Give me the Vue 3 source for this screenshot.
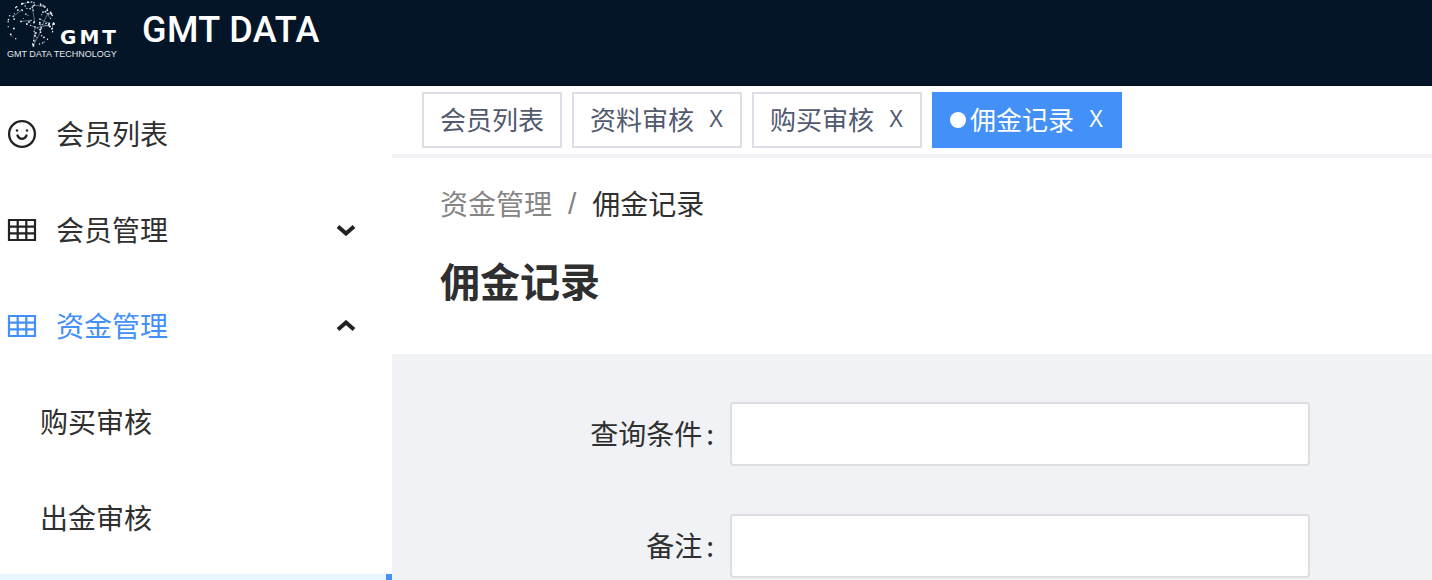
<template>
  <div class="page">
    <header class="top">
      <div class="logo">
        <svg class="globe" width="52" height="50" viewBox="0 0 52 50">
          <path
            v-for="(l, i) in links"
            :key="'l' + i"
            :d="l"
            stroke="#a4adb8"
            stroke-width="0.6"
            fill="none"
          />
          <circle
            v-for="(d, i) in dots"
            :key="i"
            :cx="d.x"
            :cy="d.y"
            :r="d.r"
            fill="#f2f4f6"
          />
        </svg>
        <div class="logo-gmt">GMT</div>
        <div class="logo-sub">GMT DATA TECHNOLOGY</div>
      </div>
      <div class="brand">GMT DATA</div>
    </header>
    <div class="main">
      <aside class="side">
        <div class="menu-item">
          <svg class="ico" width="30" height="30" viewBox="0 0 30 30" fill="none" stroke="#222" stroke-width="2.300">
            <circle cx="15" cy="15" r="12.900" />
            <path d="M10.500 16.500c1 2.400 2.700 3.300 4.500 3.300s3.500-.9 4.500-3.300" stroke-linecap="round" />
            <circle cx="10" cy="11.500" r="1.200" fill="#222" stroke="none" />
            <circle cx="20" cy="11.500" r="1.200" fill="#222" stroke="none" />
          </svg>
          <span>会员列表</span>
        </div>
        <div class="menu-item">
          <svg class="ico" width="30" height="30" viewBox="0 0 30 30" fill="none" stroke="#222" stroke-width="2.200">
            <path d="M2 5h26v20H2zM2 11.700h26M2 18.300h26M10.700 5v20M19.300 5v20" />
          </svg>
          <span>会员管理</span>
          <svg class="arrow" width="20" height="12" viewBox="0 0 20 12" fill="none" stroke="#222" stroke-width="4">
            <path d="M2 2.500l8 7 8-7" />
          </svg>
        </div>
        <div class="menu-item on">
          <svg class="ico" width="30" height="30" viewBox="0 0 30 30" fill="none" stroke="#4390f9" stroke-width="2.200">
            <path d="M2 5h26v20H2zM2 11.700h26M2 18.300h26M10.700 5v20M19.300 5v20" />
          </svg>
          <span>资金管理</span>
          <svg class="arrow" width="20" height="12" viewBox="0 0 20 12" fill="none" stroke="#222" stroke-width="4">
            <path d="M2 9.500l8-7 8 7" />
          </svg>
        </div>
        <div class="sub-item">购买审核</div>
        <div class="sub-item">出金审核</div>
        <div class="sub-active"></div>
      </aside>
      <div class="content">
        <div class="tabs">
          <div class="tab"><span class="tab-text">会员列表</span></div>
          <div class="tab"><span class="tab-text">资料审核</span><span class="x">X</span></div>
          <div class="tab"><span class="tab-text">购买审核</span><span class="x">X</span></div>
          <div class="tab cur"><i class="dot"></i><span class="tab-text">佣金记录</span><span class="x">X</span></div>
        </div>
        <div class="head">
          <div class="crumb">
            <span class="c1">资金管理</span>
            <span class="sep">/</span>
            <span>佣金记录</span>
          </div>
          <h1>佣金记录</h1>
        </div>
        <form class="form" @submit.prevent>
          <div class="row" v-for="f in fields" :key="f">
            <label>{{ f }}<span class="colon">:</span></label>
            <input type="text" />
          </div>
        </form>
      </div>
    </div>
  </div>
</template>

<script setup>
const fields = ["查询条件", "备注"];

// scattered points for the globe in the logo
let seed = 7;
const rnd = () => {
  seed = (seed * 16807) % 2147483647;
  return seed / 2147483647;
};
const dots = [];
for (let i = 0; i < 130; i++) {
  const a = rnd() * Math.PI * 2;
  const m = i < 45 ? 1 : Math.sqrt(rnd());
  const x = 24 + Math.cos(a) * 23 * m;
  const y = 23 + Math.sin(a) * 22 * m;
  // the lower left of the globe stays mostly empty
  if (x < 24 && y > 22 && rnd() > 0.2) continue;
  dots.push({ x, y, r: 0.45 + rnd() * 0.55 });
}
const links = [];
for (let i = 0; i + 1 < dots.length; i += 2) {
  const a = dots[i];
  const b = dots[i + 1];
  if (Math.hypot(a.x - b.x, a.y - b.y) < 16) {
    links.push(`M${a.x} ${a.y}L${b.x} ${b.y}`);
  }
}
</script>

<style>
html,
body {
  margin: 0;
  background: #fff;
  overflow: hidden;
}
</style>

<style scoped>
* {
  box-sizing: border-box;
}
.page {
  height: 580px;
  overflow: hidden;
  font-family: "Noto Sans CJK SC", "Liberation Sans", sans-serif;
  color: #2f2f2f;
}
.top {
  height: 86px;
  background: #031527;
  display: flex;
  color: #fff;
}
.logo {
  position: relative;
  width: 142px;
  height: 64px;
}
.globe {
  position: absolute;
  left: 7px;
  top: 1px;
}
.logo-gmt {
  position: absolute;
  left: 60px;
  top: 26px;
  font: 900 20px/22px "DejaVu Sans", sans-serif;
  letter-spacing: 3px;
}
.logo-sub {
  position: absolute;
  left: 7px;
  top: 48px;
  font: 400 9px/13px "Liberation Sans", sans-serif;
  color: #e4e7ea;
  white-space: nowrap;
}
.brand {
  font: 500 36px/60px Roboto, "Liberation Sans", sans-serif;
  letter-spacing: 0.4px;
}
.main {
  display: flex;
}
.side {
  width: 392px;
  flex: none;
  height: 494px;
  background: #fff;
  font-size: 28px;
}
.menu-item {
  height: 96px;
  display: flex;
  align-items: center;
  padding-left: 7px;
  padding-right: 36px;
}
.menu-item > span {
  position: relative;
  top: -1px;
}
.menu-item.on {
  color: #4390f9;
}
.ico {
  margin-right: 19px;
  flex: none;
}
.arrow {
  margin-left: auto;
}
.sub-item {
  height: 96px;
  line-height: 94px;
  padding-left: 40px;
}
.sub-active {
  margin-top: 8px;
  height: 40px;
  background: #e8f6fe;
  border-right: 6px solid #4390f9;
}
.content {
  flex: 1;
  background: #f0f2f6;
}
.tabs {
  height: 68px;
  background: #fff;
  display: flex;
  gap: 10px;
  padding: 6px 0 0 30px;
}
.tab {
  height: 56px;
  padding: 0 16px;
  border: 2px solid #dcdfe8;
  display: flex;
  align-items: center;
  font-size: 26px;
  color: #515a6e;
  background: #fff;
}
.tab-text {
  position: relative;
  top: -2px;
}
.tab.cur {
  background: #4390f9;
  border-color: #4390f9;
  color: #fff;
}
.dot {
  width: 16px;
  height: 16px;
  border-radius: 50%;
  background: #fff;
  margin-right: 4px;
}
.x {
  font-size: 23px;
  font-weight: 400;
  margin-left: 14px;
  width: 16px;
  text-align: center;
  position: relative;
  top: -1px;
  font-family: "Liberation Sans", sans-serif;
  transform: scaleX(0.92);
}
.head {
  margin-top: 4px;
  height: 196px;
  background: #fff;
  padding: 24px 0 0 48px;
}
.crumb {
  display: flex;
  font-size: 28px;
  line-height: 42px;
}
.c1 {
  color: #858585;
}
.sep {
  color: #858585;
  margin: 0 16px;
  font-size: 30px;
  transform: translateY(1px);
  font-family: "Liberation Sans", sans-serif;
}
h1 {
  margin: 34px 0 0;
  font-size: 40px;
  font-weight: 600;
  line-height: 44px;
}
.form {
  padding-top: 48px;
}
.row {
  display: flex;
  align-items: center;
  height: 64px;
  margin-bottom: 48px;
}
.row label {
  width: 338px;
  padding-right: 16px;
  text-align: right;
  font-size: 28px;
  position: relative;
  top: -1px;
}
.colon {
  margin-left: 4px;
}
.row input {
  width: 580px;
  height: 64px;
  border: 2px solid #dcdee2;
  border-radius: 4px;
  background: #fff;
  outline: none;
}
</style>
